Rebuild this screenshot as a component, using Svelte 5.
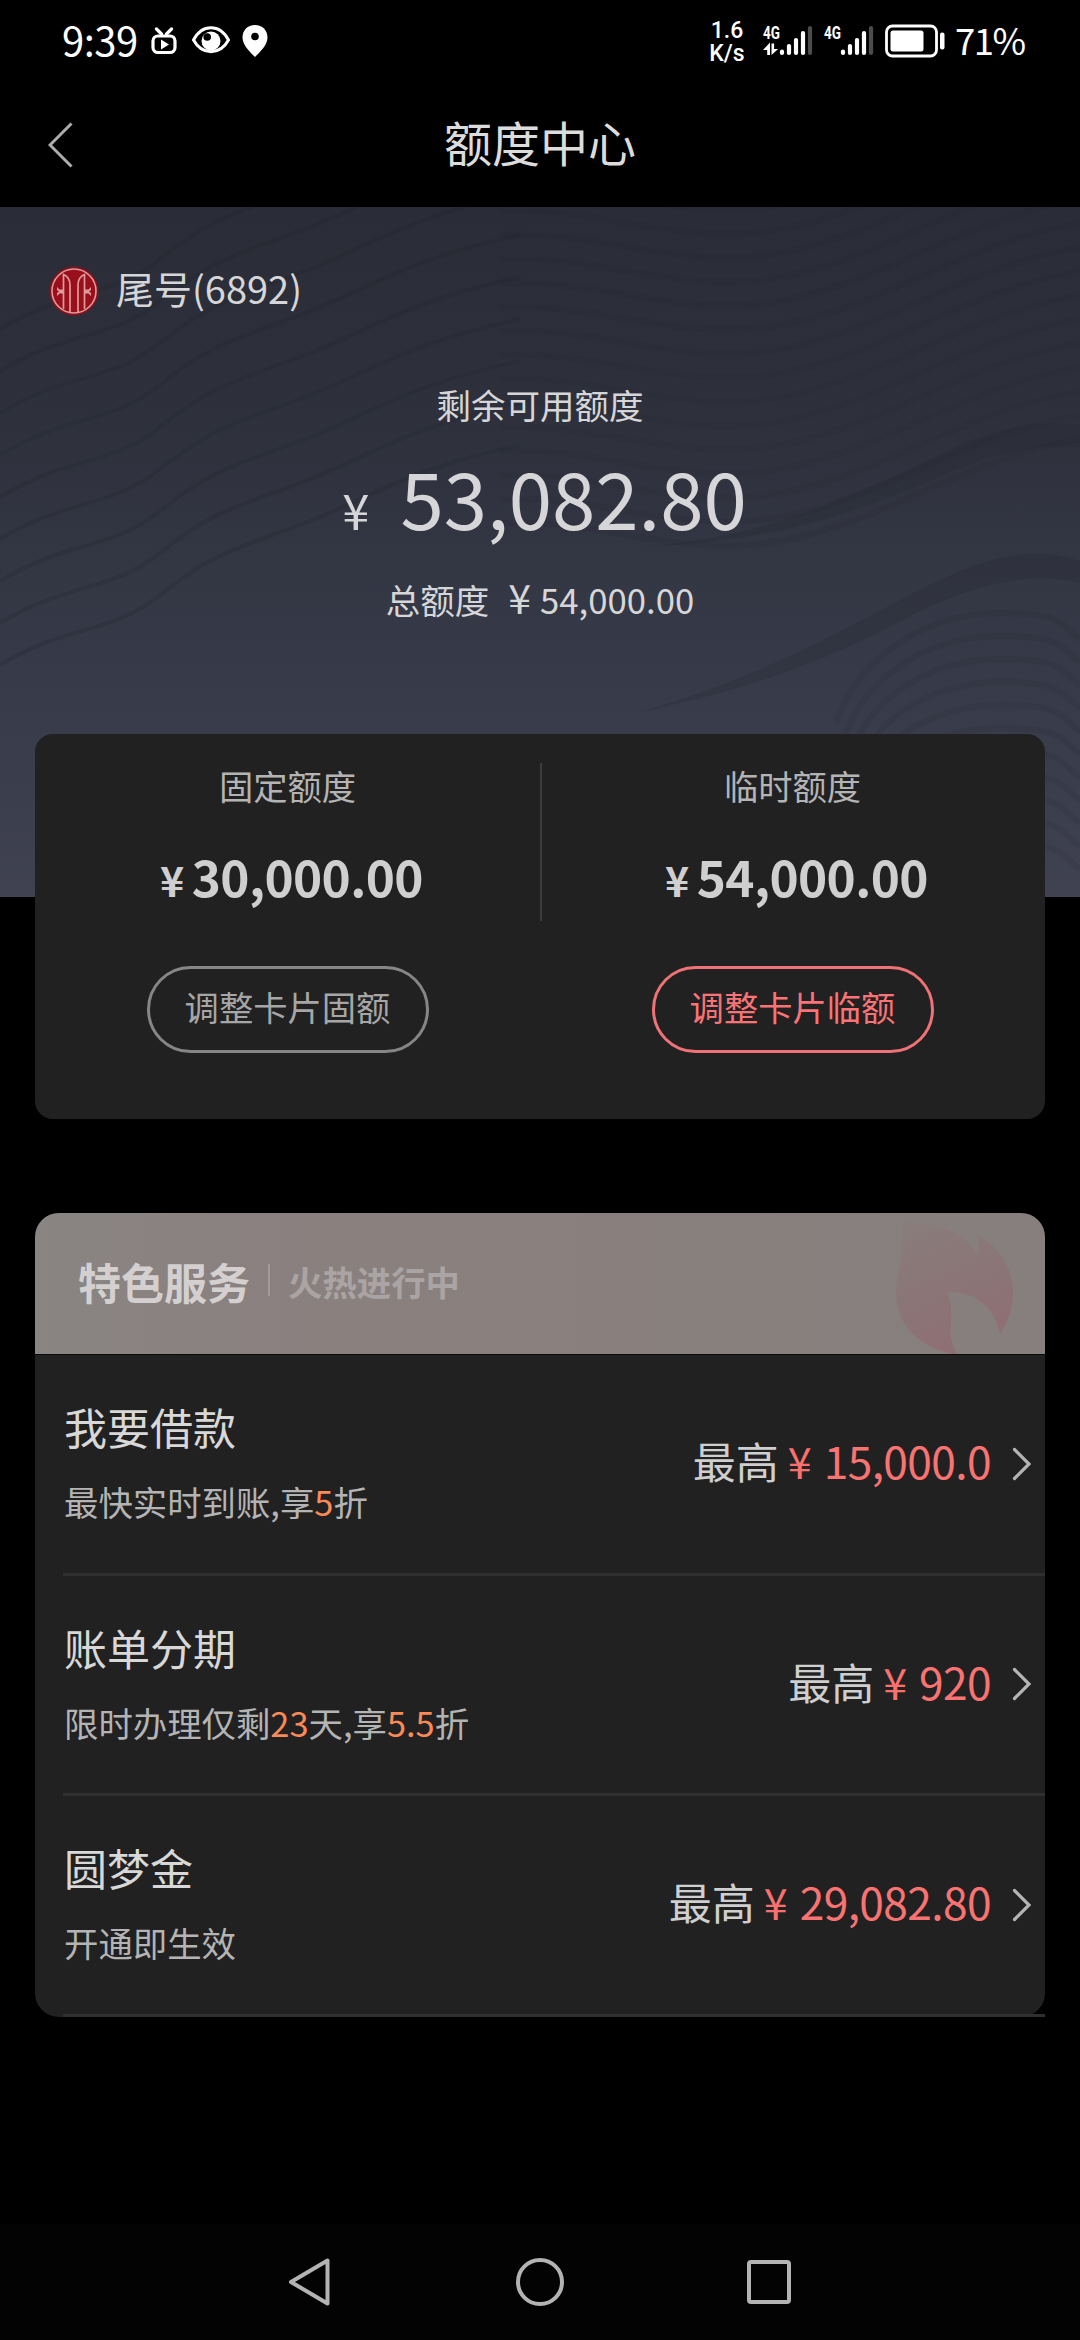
<script lang="ts">
	type SubPart = {
		text: string;
		hot?: boolean;
	};

	type Service = {
		name: string;
		desc: SubPart[];
		max: string;
	};

	const quotas = [
		{ label: '固定额度', amount: '30,000.00', action: '调整卡片固额', hot: false },
		{ label: '临时额度', amount: '54,000.00', action: '调整卡片临额', hot: true }
	];

	const services: Service[] = [
		{
			name: '我要借款',
			desc: [{ text: '最快实时到账,享' }, { text: '5', hot: true }, { text: '折' }],
			max: '15,000.0'
		},
		{
			name: '账单分期',
			desc: [
				{ text: '限时办理仅剩' },
				{ text: '23', hot: true },
				{ text: '天,享' },
				{ text: '5.5', hot: true },
				{ text: '折' }
			],
			max: '920'
		},
		{
			name: '圆梦金',
			desc: [{ text: '开通即生效' }],
			max: '29,082.80'
		}
	];

	const steps = (n: number) => Array.from({ length: n }, (_, i) => i);

	// contour lines of the hero background
	const leftWaves = steps(9).map((i) => {
		const y = 60 + i * 42;
		return `M0 ${y + 62} C70 ${y + 20} 110 ${y + 32} 160 ${y - 8} S 230 ${y - 52} 300 ${y - 78} S 400 ${y - 132} 520 ${y - 158}`;
	});
	const topWaves = steps(15).map((i) => {
		const y = -20 + i * 24;
		return `M500 ${y} C600 ${y - 6} 690 ${y + 42} 800 ${y + 14} S 960 ${y - 62} 1080 ${y - 84}`;
	});
	const cornerWaves = steps(11).map((i) => {
		const y = 406 + i * 23;
		return `M${836 + i * 6} ${y + 110} C860 ${y + 40} 930 ${y} 1000 ${y} S 1060 ${y + 14} 1080 ${y + 26}`;
	});
</script>

{#snippet signal(data: boolean)}
	<svg class="signal" width="50" height="34" viewBox="0 0 50 34">
		<text x="0" y="15" class="net" textLength="17" lengthAdjust="spacingAndGlyphs">4G</text>
		{#if data}
			<path d="M0 26l7-7.500V31H4.200V26zM8.500 19.500h2.600v5.500h4L8.500 31z" fill="#fff" />
		{/if}
		<path
			d="M19 27.500v1.500M26 22v7M33 16v13M40 9v20"
			stroke="#fff"
			stroke-width="4.200"
			stroke-linecap="round"
		/>
		<path d="M47 4v25" stroke="#4c4c4c" stroke-width="4.200" stroke-linecap="round" />
	</svg>
{/snippet}

<div class="screen">
	<div class="status">
		<span class="clock">9:39</span>
		<svg class="tv" width="26" height="28" viewBox="0 0 26 28">
			<rect x="2" y="9" width="22" height="16.500" rx="5" fill="none" stroke="#fff" stroke-width="3.200" />
			<path d="M5.500 2l5 5M20.500 2l-5 5" stroke="#fff" stroke-width="3.200" stroke-linecap="round" />
			<path d="M10 12.500v10l8-5z" fill="#fff" />
		</svg>
		<svg class="eye" width="38" height="28" viewBox="0 0 38 28">
			<path
				d="M1.500 14C10-2.500 28-2.500 36.500 14C28 29.500 10 29.500 1.500 14z"
				fill="none"
				stroke="#fff"
				stroke-width="3"
			/>
			<circle cx="19" cy="15" r="9.500" fill="#fff" />
			<circle cx="15.200" cy="11" r="3.800" fill="#000" />
		</svg>
		<svg class="pin" width="26" height="32" viewBox="0 0 26 32">
			<path
				d="M13 0C5.500 0 .5 5.300.5 12.500C.5 20 8 27 13 32C18 27 25.500 20 25.500 12.500C25.500 5.300 20.500 0 13 0z"
				fill="#fff"
			/>
			<circle cx="13" cy="11.500" r="3.800" fill="#000" />
		</svg>
		<div class="speed">
			<span>1.6</span>
			<span>K/s</span>
		</div>
		{@render signal(true)}
		{@render signal(false)}
		<svg class="battery" width="60" height="34" viewBox="0 0 60 34">
			<rect x="1.500" y="2" width="50" height="30" rx="6" fill="none" stroke="#fff" stroke-width="2.800" />
			<rect x="5.500" y="6.500" width="33" height="21" rx="2.500" fill="#fff" />
			<rect x="55" y="8.500" width="4.500" height="17" rx="2" fill="#fff" />
		</svg>
		<span class="percent">71%</span>
	</div>

	<header>
		<svg class="back" width="26" height="46" viewBox="0 0 26 46">
			<path d="M23.500 1.500L2 23l21.500 21.500" fill="none" stroke="#adadad" stroke-width="3" />
		</svg>
		<h1>额度中心</h1>
	</header>

	<section class="hero">
		<svg class="waves" width="1080" height="690" viewBox="0 0 1080 690" fill="none" aria-hidden="true">
			<g stroke="#20222a" stroke-opacity="0.2" stroke-width="4">
				{#each leftWaves as d}
					<path {d} />
				{/each}
			</g>
			<g stroke="#20222a" stroke-opacity="0.1" stroke-width="6">
				{#each topWaves as d}
					<path {d} />
				{/each}
				{#each cornerWaves as d}
					<path {d} />
				{/each}
			</g>
			<path
				d="M640 340C780 330 870 280 953 241C1000 219 1040 214 1080 218V240C1020 236 980 252 930 274C850 306 780 334 640 340z"
				fill="#24262e"
				fill-opacity="0.25"
			/>
			<path
				d="M640 505C760 470 830 430 919 383C980 352 1030 336 1080 354V376C1030 364 980 376 920 404C840 448 760 480 640 505z"
				fill="#24262e"
				fill-opacity="0.25"
			/>
		</svg>
		<div class="account">
			<svg width="50" height="50" viewBox="0 0 50 50">
				<circle cx="25" cy="25" r="24.500" fill="#86101d" />
				<circle cx="25" cy="25" r="22" fill="#9a0f1c" stroke="#dd9a9b" stroke-width="1.600" />
				<g fill="none" stroke="#dd9a9b" stroke-width="1.700">
					<path d="M14.500 43V8.500C18 10 21 13 21 19V46.500" />
					<path d="M35.500 43V8.500C32 10 29 13 29 19V46.500" />
				</g>
				<path
					d="M8 21l2.500 2.500h4v4h-4L8 30v-3l2-1.500L8 24zM42 21l-2.500 2.500h-4v4h4L42 30v-3l-2-1.500l2-1.500z"
					fill="#dd9a9b"
				/>
			</svg>
			<span>尾号(6892)</span>
		</div>
		<p class="caption">剩余可用额度</p>
		<p class="available"><span class="yen">¥</span><span>53,082.80</span></p>
		<p class="total"><span>总额度</span><span class="yen">¥</span><span class="num">54,000.00</span></p>
	</section>

	<section class="quota">
		{#each quotas as quota}
			<div class="quota-item">
				<span class="quota-label">{quota.label}</span>
				<p class="quota-amount"><span class="yen">¥</span>{quota.amount}</p>
				<button type="button" class="adjust" class:hot={quota.hot}>{quota.action}</button>
			</div>
		{/each}
	</section>

	<section class="services">
		<div class="services-head">
			<h2>特色服务</h2>
			<span class="bar"></span>
			<span class="tagline">火热进行中</span>
			<svg class="flame" width="126" height="141" viewBox="0 0 126 141" aria-hidden="true">
				<defs>
					<linearGradient id="flame" x1="0.1" y1="0" x2="0.5" y2="1">
						<stop offset="0" stop-color="#897d7b" />
						<stop offset="0.45" stop-color="#8a7676" />
						<stop offset="1" stop-color="#8f6f74" />
					</linearGradient>
				</defs>
				<path
					d="M12 10C48 8 76 20 87 42C89 36 89 28 88 22C112 36 123 58 123 80C123 95 118 110 110 121C104 94 86 78 57 79C68 104 53 116 67 141H62C25 133 6 108 6 80C6 60 17 36 12 10z"
					fill="url(#flame)"
				/>
			</svg>
		</div>
		<ul>
			{#each services as service}
				<li>
					<div class="info">
						<h3>{service.name}</h3>
						<p>
							{#each service.desc as part}<span class:accent={part.hot}>{part.text}</span>{/each}
						</p>
					</div>
					<p class="max">最高<span class="yen">¥</span><span class="value">{service.max}</span></p>
					<svg class="chevron" width="20" height="34" viewBox="0 0 20 34">
						<path
							d="M2.500 2.500L17 17L2.500 31.500"
							fill="none"
							stroke="#b4b4b4"
							stroke-width="3.200"
							stroke-linecap="round"
						/>
					</svg>
				</li>
			{/each}
		</ul>
	</section>

	<nav>
		<svg width="504" height="50" viewBox="0 0 504 50" fill="none" stroke="#b3b3b3" stroke-width="4">
			<path d="M39.500 3.500V46.500L3 25z" stroke-linejoin="round" />
			<circle cx="252" cy="25" r="22" />
			<rect x="461" y="5" width="40" height="40" rx="2" />
		</svg>
	</nav>
</div>

<style>
	:global(body) {
		background: #000;
	}

	.screen {
		display: flex;
		flex-direction: column;
		width: 1080px;
		height: 2340px;
		overflow: hidden;
		background: #000;
		color: #d6d6d8;
		font-family: 'Noto Sans CJK SC', sans-serif;
	}

	h1,
	h2,
	h3,
	p,
	ul {
		margin: 0;
		padding: 0;
		font-weight: 400;
	}

	.status {
		display: flex;
		align-items: center;
		height: 82px;
		padding: 0 57px 0 62px;
		color: #fff;
	}

	.clock {
		width: 77px;
		margin: -4px 12px 0 0;
		font-size: 40px;
		line-height: 78px;
		letter-spacing: -0.5px;
	}

	.tv {
		margin-right: 15px;
	}

	.eye {
		margin: -2px 12px 0 0;
	}

	.speed {
		display: flex;
		flex-direction: column;
		align-items: center;
		width: 36px;
		margin: 2px 18px 0 auto;
		font-family: Roboto, sans-serif;
		font-size: 23px;
		font-weight: 500;
		line-height: 23px;
	}

	.signal {
		margin-right: 11px;
		overflow: visible;
	}

	.net {
		fill: #fff;
		font-family: Roboto, sans-serif;
		font-size: 18px;
		font-weight: 700;
	}

	.battery {
		margin-right: 10px;
	}

	.percent {
		width: 68px;
		margin-top: -3px;
		font-size: 36.500px;
		line-height: 76px;
		letter-spacing: -1.500px;
	}

	header {
		display: grid;
		grid-template-columns: 1fr auto 1fr;
		align-items: center;
		height: 125px;
	}

	.back {
		margin-left: 48px;
	}

	h1 {
		margin-top: -8px;
		font-size: 48px;
		line-height: 116px;
		color: #dcdcdc;
	}

	.hero {
		position: relative;
		display: flex;
		flex-direction: column;
		align-items: center;
		height: 690px;
		background: linear-gradient(#2a2c37 0%, #2e313c 30%, #363947 65%, #404252 100%);
	}

	.waves {
		position: absolute;
		inset: 0;
	}

	.account,
	.caption,
	.available,
	.total {
		position: relative;
	}

	.account {
		display: flex;
		align-items: center;
		align-self: flex-start;
		gap: 17px;
		height: 50px;
		margin: 59px 0 0 49px;
		font-size: 38px;
	}

	.account span {
		line-height: 46px;
		margin-top: -6px;
	}

	.caption {
		margin-top: 64px;
		font-size: 34.500px;
		line-height: 48px;
	}

	.available {
		display: flex;
		align-items: baseline;
		height: 110px;
		margin-top: 13px;
		margin-left: 9px;
		font-size: 78px;
		line-height: 110px;
	}

	.available .yen {
		margin-right: 31px;
		font-size: 49px;
	}

	.total {
		display: flex;
		align-items: baseline;
		margin-top: 21px;
		font-size: 34.500px;
		line-height: 48px;
	}

	.total .yen {
		margin: 0 9px 0 19px;
		font-size: 41px;
	}

	.total .num {
		font-size: 34.700px;
	}

	.quota {
		position: relative;
		display: flex;
		width: 1010px;
		height: 385px;
		margin: -163px auto 0;
		border-radius: 18px;
		background: #212121;
	}

	.quota-item {
		display: flex;
		flex: 1;
		flex-direction: column;
		align-items: center;
		padding-top: 27px;
	}

	/* thin rule between the two halves */
	.quota-item + .quota-item::before {
		content: '';
		position: absolute;
		left: 505px;
		top: 29px;
		width: 2px;
		height: 158px;
		background: #3c3c3c;
	}

	.quota-label {
		font-size: 34.300px;
		line-height: 48px;
		color: #b4b4b4;
	}

	.quota-amount {
		margin: 32px 0 0 8px;
		font-size: 49.500px;
		font-weight: 700;
		line-height: 70px;
		letter-spacing: -0.600px;
		color: #cfcfcf;
	}

	.quota-amount .yen {
		margin-right: 8px;
		font-size: 41px;
	}

	.adjust {
		width: 282px;
		height: 87px;
		margin-top: 52px;
		padding: 0 0 8px;
		border: 3px solid #868686;
		border-radius: 44px;
		background: none;
		font: inherit;
		font-size: 34.300px;
		color: #a6a6a6;
	}

	.adjust.hot {
		border-color: #ee7276;
		color: #fa7376;
	}

	.services {
		width: 1010px;
		margin: 94px auto 0;
		border-radius: 24px;
		background: #212121;
	}

	.services-head {
		display: flex;
		align-items: center;
		height: 141px;
		padding-left: 43px;
		border-bottom: 1px solid #0a0a0a;
		border-radius: 24px 24px 0 0;
		background: linear-gradient(90deg, #898583 0%, #8a807f 25%, #89807d 60%, #867f7e 100%);
	}

	h2 {
		margin-top: -6px;
		font-size: 43px;
		font-weight: 700;
		line-height: 134px;
		color: #d4d0d0;
	}

	.bar {
		width: 2px;
		height: 32px;
		margin: -8px 18px 0;
		background: #a39b9b;
	}

	.tagline {
		font-size: 34.400px;
		font-weight: 700;
		line-height: 48px;
		margin-top: -6px;
		color: #aba4a4;
	}

	.flame {
		margin: 0 29px 0 auto;
	}

	ul {
		list-style: none;
	}

	li {
		display: flex;
		align-items: center;
		height: 217.500px;
		margin-left: 28px;
		padding-right: 13px;
		border-bottom: 3px solid #303030;
	}

	.info {
		flex: 1;
		padding: 0 0 7px 1px;
	}

	h3 {
		font-size: 43px;
		line-height: 64px;
		color: #d8d8d8;
	}

	.info p {
		margin-top: 18px;
		font-size: 34.400px;
		line-height: 50px;
		color: #b4b4b4;
	}

	.info .accent {
		color: #fb8a58;
	}

	.max {
		margin-top: -7px;
		font-size: 43px;
		line-height: 64px;
		color: #cfcfcf;
	}

	.max .yen {
		margin: 0 12px 0 9px;
		color: #f9706f;
	}

	.max .value {
		margin-right: 21px;
		font-size: 44.300px;
		letter-spacing: -0.600px;
		color: #f97373;
	}

	nav {
		display: flex;
		align-items: center;
		justify-content: center;
		height: 116px;
		margin-top: auto;
		background: #030303;
	}
</style>
